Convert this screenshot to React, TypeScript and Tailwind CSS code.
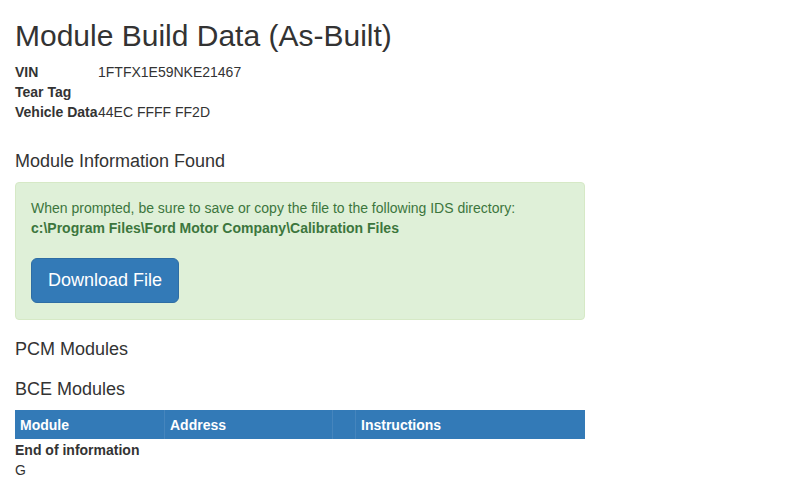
import React from "react";

const font = { fontFamily: '"Liberation Sans", Arial, sans-serif' };

function App() {
  return (
    <div className="min-h-screen bg-white text-[14px] leading-[20px] text-[#333]" style={font}>
      <div className="w-[570px] ml-[15px]">
        <h1 className="text-[30px] leading-[33px] pt-[19px] mb-[10px] font-normal">Module Build Data (As-Built)</h1>

        <div className="flex flex-col">
          <div className="flex">
            <span className="w-[83px] font-bold">VIN</span>
            <span>1FTFX1E59NKE21467</span>
          </div>
          <div className="flex">
            <span className="w-[83px] font-bold">Tear Tag</span>
            <span></span>
          </div>
          <div className="flex">
            <span className="w-[83px] font-bold">Vehicle Data</span>
            <span>44EC FFFF FF2D</span>
          </div>
        </div>

        <h4 className="text-[18px] leading-[20px] mt-[29px] mb-[11px]">Module Information Found</h4>

        <div className="bg-[#dff0d8] border border-[#d6e9c6] rounded-[4px] text-[#3c763d] px-[15px] pt-[15px] pb-[16px]">
          <p>When prompted, be sure to save or copy the file to the following IDS directory:</p>
          <p className="font-bold">c:\Program Files\Ford Motor Company\Calibration Files</p>
          <button className="mt-[20px] bg-[#337ab7] border border-[#2e6da4] text-white text-[18px] leading-[25px] px-[16px] py-[9px] rounded-[6px]">
            Download File
          </button>
        </div>

        <h4 className="text-[18px] leading-[20px] mt-[19px]">PCM Modules</h4>
        <h4 className="text-[18px] leading-[20px] mt-[20px] mb-[11px]">BCE Modules</h4>

        <div className="flex bg-[#337ab7] text-white font-bold h-[29px] items-center">
          <div className="w-[149px] pl-[5px] h-full flex items-center">Module</div>
          <div className="w-[168px] pl-[5px] h-full flex items-center border-l border-[#4585bd]">Address</div>
          <div className="w-[23px] h-full border-l border-[#4585bd]"></div>
          <div className="flex-1 pl-[5px] h-full flex items-center border-l border-[#4585bd]">Instructions</div>
        </div>
        <div className="font-bold mt-[1px]">End of information</div>
        <div>G</div>
      </div>
    </div>
  );
}

export default App;
